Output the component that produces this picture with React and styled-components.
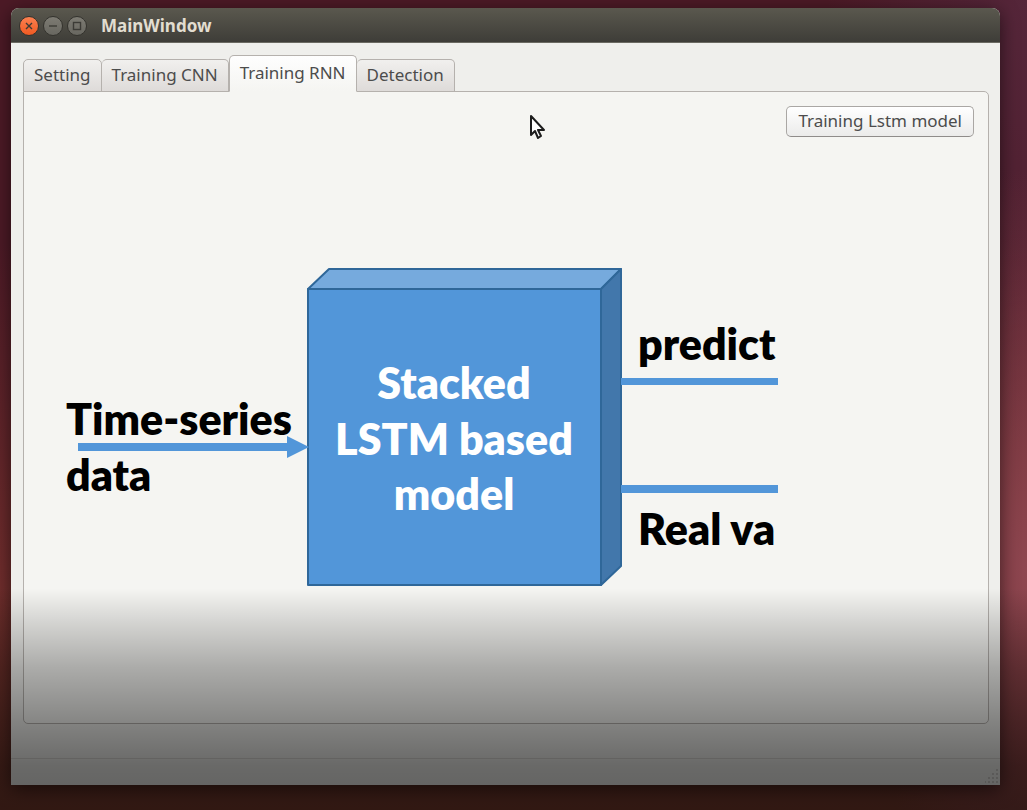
import React from 'react';
import styled, { createGlobalStyle } from 'styled-components';

const GlobalStyle = createGlobalStyle`
  * { box-sizing: border-box; }
  body { margin: 0; background: #431722; }
`;

const Desktop = styled.div`
  position: relative;
  display: flex;
  min-height: 100vh;
  padding: 8px 27px 25px 11px;
  overflow: hidden;
  font-family: 'Noto Sans', 'Open Sans', sans-serif;
  font-size: 17px;
  color: #4c4c4c;
  background:
    radial-gradient(ellipse 160px 400px at 100% 570px, #8e4650 0%, rgba(142, 70, 80, 0) 100%),
    radial-gradient(ellipse 200px 500px at 100% 0, #55263a 0%, rgba(85, 38, 58, 0) 100%),
    linear-gradient(#4c1a26, #4c1a26 30%, #6e2c2c 70%, #7a3c2e);
`;

const Window = styled.main`
  display: flex;
  flex: 1;
  flex-direction: column;
  border-radius: 8px 8px 0 0;
  background: #efefec;
  box-shadow: 0 4px 18px rgba(0, 0, 0, 0.55);
`;

const TitleBar = styled.header`
  display: flex;
  align-items: center;
  gap: 4px;
  height: 35px;
  padding: 1px 8px 0;
  border-radius: 8px 8px 0 0;
  border-bottom: 1px solid #6b6a62;
  background: linear-gradient(#5a584e, #3e3d38);
`;

const Title = styled.h1`
  margin: 0 0 0 10px;
  font-size: 17px;
  line-height: 24px;
  color: #e2ddd0;
`;

const WindowButton = styled.button`
  display: flex;
  width: 20px;
  height: 20px;
  padding: 0;
  border: 1px solid #34332e;
  border-radius: 50%;
  color: #3c3b36;
  background: ${({ $close }) => ($close ? 'linear-gradient(#fb8050, #f05a22)' : 'linear-gradient(#7d7b73, #686760)')};
`;

const Body = styled.div`
  display: flex;
  flex: 1;
  flex-direction: column;
  padding: 12px 11px 34px 12px;
`;

const TabList = styled.div`
  display: flex;
  align-items: flex-end;
  height: 37px;
  margin-bottom: -1px;
  z-index: 1;
`;

const Tab = styled.button`
  height: ${({ $active }) => ($active ? 37 : 33)}px;
  padding: 0 10px 2px;
  border: 1px solid #b5b1ad;
  border-bottom-color: ${({ $active }) => ($active ? '#f5f5f2' : '#b5b1ad')};
  border-left-width: ${({ $joined }) => ($joined ? 0 : 1)}px;
  border-radius: 5px 5px 0 0;
  font: inherit;
  line-height: 24px;
  color: inherit;
  background: ${({ $active }) => ($active ? 'linear-gradient(#fefefe, #f5f5f2)' : 'linear-gradient(#f1f0ee, #dedbd9)')};
`;

const Panel = styled.section`
  display: flex;
  flex: 1;
  flex-direction: column;
  align-items: flex-start;
  padding: 14px;
  border: 1px solid #b5b1ad;
  border-radius: 0 5px 5px 5px;
  background: #f5f5f2;
`;

const ActionButton = styled.button`
  align-self: flex-end;
  height: 31px;
  padding: 0 11px 2px;
  border: 1px solid #aaa7a4;
  border-bottom-color: #8f8c8a;
  border-radius: 5px;
  font: inherit;
  line-height: 24px;
  color: inherit;
  background: linear-gradient(#ffffff, #ebebea);
`;

const Diagram = styled.svg`
  width: 740px;
  height: 340px;
  margin: 118px 0 0 12px;
  font-family: Lato, 'Open Sans', sans-serif;
  font-size: 43px;
  font-weight: 800;
`;

const StatusBar = styled.footer`
  display: flex;
  align-items: flex-end;
  justify-content: flex-end;
  height: 27px;
  padding: 2px;
  border-top: 1px solid #d8d6d3;
`;

const BottomShade = styled.div`
  position: absolute;
  inset: auto 0 0;
  height: 222px;
  pointer-events: none;
  background: linear-gradient(
    rgba(0, 0, 0, 0),
    rgba(0, 0, 0, 0.14) 16%,
    rgba(0, 0, 0, 0.3) 36%,
    rgba(0, 0, 0, 0.45) 60%,
    rgba(0, 0, 0, 0.56) 80%,
    rgba(0, 0, 0, 0.6)
  );
`;

const Pointer = styled.svg`
  position: absolute;
  top: 114px;
  left: 529px;
  pointer-events: none;
`;

const tabs = ['Setting', 'Training CNN', 'Training RNN', 'Detection'];
const activeTab = 2;

const gripDots = [0, 1, 2, 3].flatMap((row) =>
  Array.from({ length: row + 1 }, (_, i) => ({ x: 11 - i * 4, y: row * 4 }))
);

function ControlIcon({ kind }) {
  return (
    <svg width="18" height="18" viewBox="0 0 18 18" fill="none" stroke="currentColor" strokeWidth="1.4">
      {kind === 'Close' && <path d="M6 6l6 6M12 6l-6 6" />}
      {kind === 'Minimize' && <path d="M5 9h8" />}
      {kind === 'Maximize' && <rect x="5.5" y="5.5" width="7" height="7" />}
    </svg>
  );
}

function ModelDiagram() {
  return (
    <Diagram viewBox="50 255 740 340" role="img" aria-label="Stacked LSTM based model">
      <g stroke="#2f6799" strokeWidth="2" strokeLinejoin="round">
        <path d="M308 289L329 269H621L601 289Z" fill="#76aadd" />
        <path d="M601 289L621 269V566L601 585Z" fill="#4277ab" />
        <path d="M308 289H601V585H308Z" fill="#5296d9" />
      </g>
      <g fill="#5296d9">
        <path d="M78 443H287V436L309 447L287 458V451H78Z" />
        <path d="M621 378H778V385H621Z" />
        <path d="M621 485H778V493H621Z" />
      </g>
      <g fill="#000">
        <text x="66" y="435">Time-series</text>
        <text x="66" y="491">data</text>
        <text x="638" y="360">predict</text>
        <text x="638" y="545">Real va</text>
      </g>
      <g fill="#fff" textAnchor="middle">
        <text x="454" y="399">Stacked</text>
        <text x="454" y="455">LSTM based</text>
        <text x="454" y="510">model</text>
      </g>
    </Diagram>
  );
}

export default function App() {
  return (
    <Desktop>
      <GlobalStyle />
      <Window>
        <TitleBar>
          {['Close', 'Minimize', 'Maximize'].map((kind) => (
            <WindowButton key={kind} $close={kind === 'Close'} aria-label={kind}>
              <ControlIcon kind={kind} />
            </WindowButton>
          ))}
          <Title>MainWindow</Title>
        </TitleBar>
        <Body>
          <TabList role="tablist">
            {tabs.map((label, i) => (
              <Tab
                key={label}
                role="tab"
                aria-selected={i === activeTab}
                $active={i === activeTab}
                $joined={i === activeTab + 1 || i === 1}
              >
                {label}
              </Tab>
            ))}
          </TabList>
          <Panel role="tabpanel">
            <ActionButton>Training Lstm model</ActionButton>
            <ModelDiagram />
          </Panel>
        </Body>
        <StatusBar>
          <svg width="13" height="14" fill="#d0cecb" aria-hidden="true">
            {gripDots.map(({ x, y }) => (
              <rect key={`${x}-${y}`} x={x} y={y} width="2" height="2" />
            ))}
          </svg>
        </StatusBar>
      </Window>
      <BottomShade />
      <Pointer width="18" height="28" viewBox="0 0 18 28" aria-hidden="true">
        <path
          d="M2 2V21L6 17L9 24L12 22L9 16H15Z"
          fill="#fff"
          stroke="#1d1d1d"
          strokeWidth="2"
          strokeLinejoin="round"
        />
      </Pointer>
    </Desktop>
  );
}
